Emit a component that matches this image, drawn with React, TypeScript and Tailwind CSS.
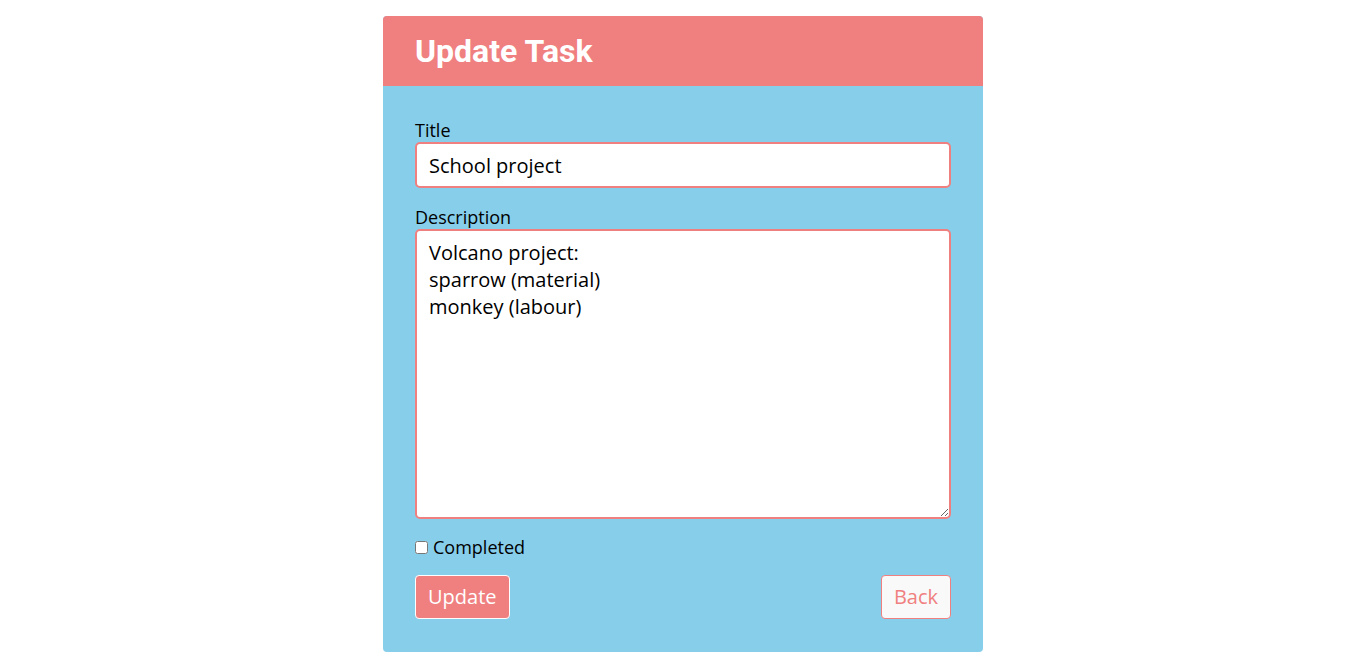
export default function App() {
  return (
    <div className="min-h-screen bg-white pt-4" style={{ fontFamily: '"Open Sans", sans-serif' }}>
      <div className="ml-[383px] w-[600px] overflow-hidden rounded-[4px] bg-[#87ceeb]">
        <div className="flex h-[70px] items-center bg-[#f08080] px-8">
          <h1 className="font-['Roboto',sans-serif] text-[32px] font-bold text-white">Update Task</h1>
        </div>
        <form className="flex flex-col px-8 pb-[33px] pt-8">
          <label className="text-[18px] leading-[24px] text-black">Title</label>
          <input
            defaultValue="School project"
            className="h-[46px] w-full rounded-[5px] border-2 border-[#f08080] bg-white px-3 text-[20px] text-black outline-none"
          />
          <label className="mt-[17px] text-[18px] leading-[24px] text-black">Description</label>
          <textarea
            defaultValue={'Volcano project:\nsparrow (material)\nmonkey (labour)'}
            className="h-[290px] w-full rounded-[5px] border-2 border-[#f08080] bg-white px-3 py-2 text-[20px] leading-[27px] text-black outline-none"
          />
          <label className="mt-[16px] flex h-[24px] items-center text-[18px] leading-[24px] text-black">
            <input type="checkbox" className="mr-[5px] h-[13px] w-[13px]" />
            Completed
          </label>
          <div className="mt-[16px] flex items-center justify-between">
            <button type="button" className="h-[44px] rounded-[4px] border border-white bg-[#f08080] px-3 text-[20px] text-white">
              Update
            </button>
            <button type="button" className="h-[44px] rounded-[4px] border border-[#f08080] bg-[#f9f9f9] px-3 text-[20px] text-[#f08080]">
              Back
            </button>
          </div>
        </form>
      </div>
    </div>
  );
}
